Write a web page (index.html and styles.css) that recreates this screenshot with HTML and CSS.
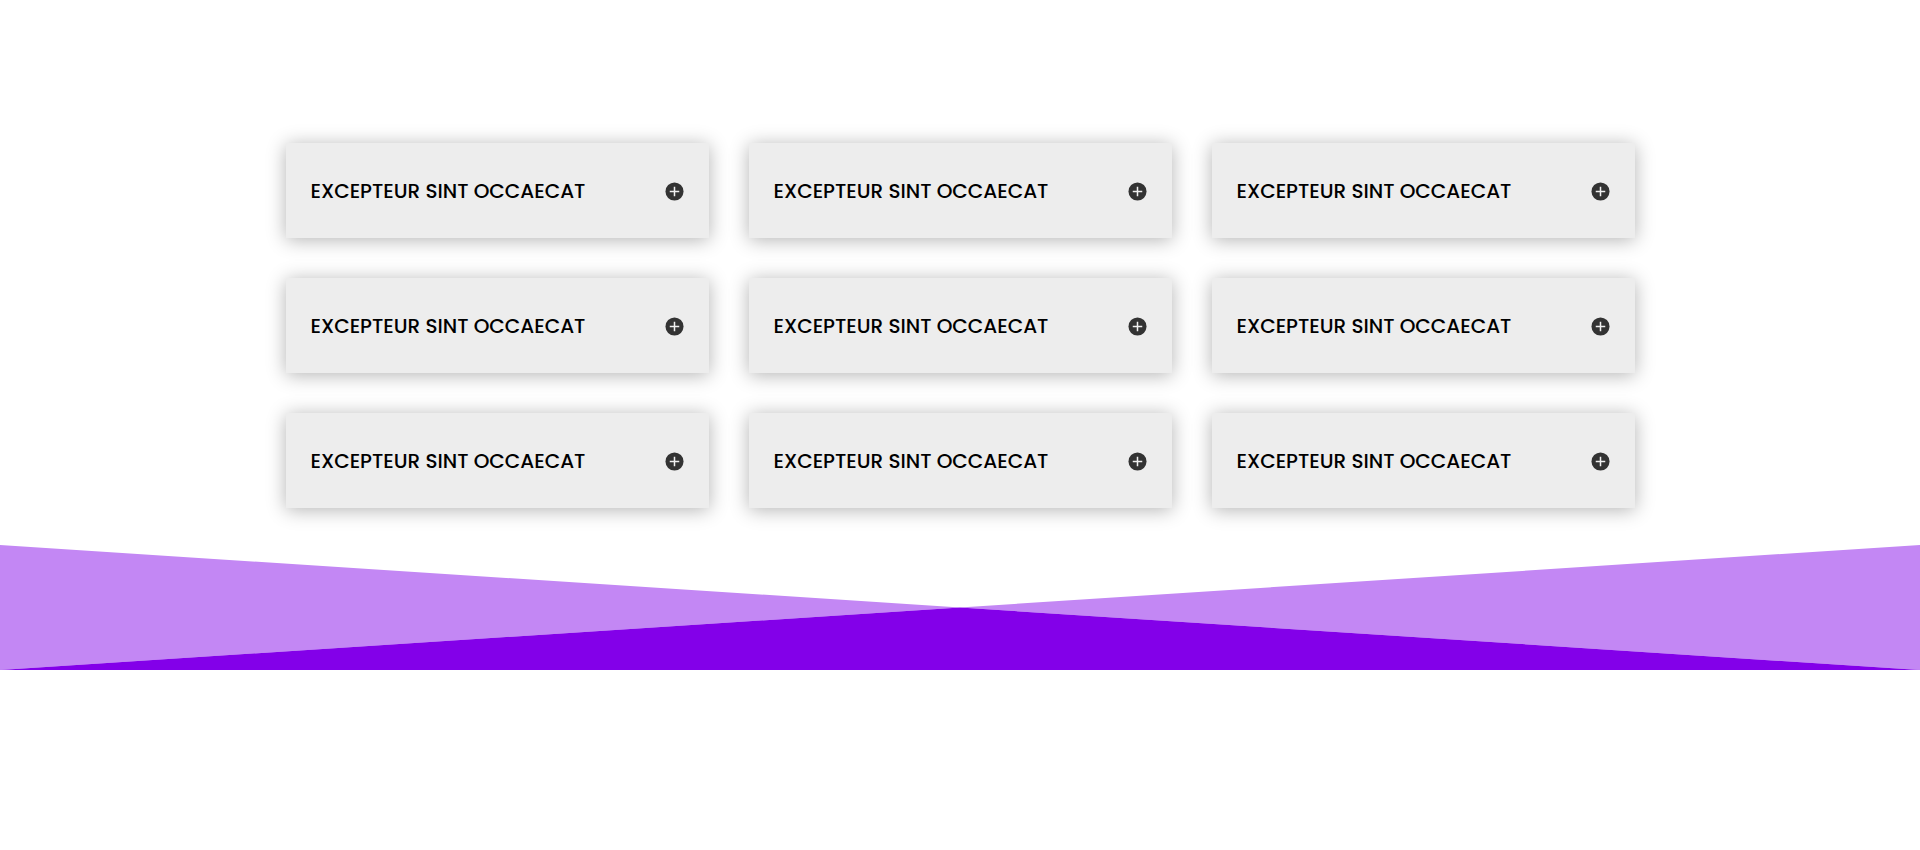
FILE: index.html
```html
<!DOCTYPE html>
<html lang="en">
<head>
<meta charset="utf-8">
<title>Toggles</title>
<link rel="stylesheet" href="styles.css">
</head>
<body>
<section class="toggles">
  <div class="grid">
    <div class="card"><h5 class="title">EXCEPTEUR SINT OCCAECAT</h5><svg class="icon" viewBox="0 0 20 20"><circle cx="10" cy="10" r="9.5" fill="#333333"/><path d="M10 5v10M5 10h10" stroke="#f0f0f0" stroke-width="1.6"/></svg></div>
    <div class="card"><h5 class="title">EXCEPTEUR SINT OCCAECAT</h5><svg class="icon" viewBox="0 0 20 20"><circle cx="10" cy="10" r="9.5" fill="#333333"/><path d="M10 5v10M5 10h10" stroke="#f0f0f0" stroke-width="1.6"/></svg></div>
    <div class="card"><h5 class="title">EXCEPTEUR SINT OCCAECAT</h5><svg class="icon" viewBox="0 0 20 20"><circle cx="10" cy="10" r="9.5" fill="#333333"/><path d="M10 5v10M5 10h10" stroke="#f0f0f0" stroke-width="1.6"/></svg></div>
    <div class="card"><h5 class="title">EXCEPTEUR SINT OCCAECAT</h5><svg class="icon" viewBox="0 0 20 20"><circle cx="10" cy="10" r="9.5" fill="#333333"/><path d="M10 5v10M5 10h10" stroke="#f0f0f0" stroke-width="1.6"/></svg></div>
    <div class="card"><h5 class="title">EXCEPTEUR SINT OCCAECAT</h5><svg class="icon" viewBox="0 0 20 20"><circle cx="10" cy="10" r="9.5" fill="#333333"/><path d="M10 5v10M5 10h10" stroke="#f0f0f0" stroke-width="1.6"/></svg></div>
    <div class="card"><h5 class="title">EXCEPTEUR SINT OCCAECAT</h5><svg class="icon" viewBox="0 0 20 20"><circle cx="10" cy="10" r="9.5" fill="#333333"/><path d="M10 5v10M5 10h10" stroke="#f0f0f0" stroke-width="1.6"/></svg></div>
    <div class="card"><h5 class="title">EXCEPTEUR SINT OCCAECAT</h5><svg class="icon" viewBox="0 0 20 20"><circle cx="10" cy="10" r="9.5" fill="#333333"/><path d="M10 5v10M5 10h10" stroke="#f0f0f0" stroke-width="1.6"/></svg></div>
    <div class="card"><h5 class="title">EXCEPTEUR SINT OCCAECAT</h5><svg class="icon" viewBox="0 0 20 20"><circle cx="10" cy="10" r="9.5" fill="#333333"/><path d="M10 5v10M5 10h10" stroke="#f0f0f0" stroke-width="1.6"/></svg></div>
    <div class="card"><h5 class="title">EXCEPTEUR SINT OCCAECAT</h5><svg class="icon" viewBox="0 0 20 20"><circle cx="10" cy="10" r="9.5" fill="#333333"/><path d="M10 5v10M5 10h10" stroke="#f0f0f0" stroke-width="1.6"/></svg></div>
  </div>
  <svg class="divider" viewBox="0 0 1920 125" preserveAspectRatio="none">
    <polygon points="0,0 960,62.5 0,125" fill="#c387f4"/>
    <polygon points="1920,0 1920,125 960,62.5" fill="#c387f4"/>
    <polygon points="0,125 960,62.5 1920,125" fill="#8300e9"/>
  </svg>
</section>
</body>
</html>
```

FILE: styles.css
```css
html, body {
  margin: 0;
  padding: 0;
  background: #ffffff;
}

.toggles {
  padding-top: 143px;
}

.grid {
  display: grid;
  grid-template-columns: repeat(3, 423px);
  column-gap: 40px;
  row-gap: 40px;
  justify-content: center;
}

.card {
  height: 95px;
  box-sizing: border-box;
  background: #ededed;
  box-shadow: 0 2px 18px 0 rgba(0, 0, 0, 0.3);
  display: flex;
  align-items: center;
  justify-content: space-between;
  padding: 0 25px 0 25px;
}

.title {
  margin: 0;
  font-family: "Poppins", Inter, "Open Sans", sans-serif;
  font-weight: 500;
  font-size: 20px;
  line-height: 1;
  color: #000000;
  letter-spacing: 0;
}

.icon {
  width: 19px;
  height: 19px;
  display: block;
  margin-top: 2px;
}

.divider {
  display: block;
  width: 100%;
  height: 125px;
  margin-top: 37px;
}
```
